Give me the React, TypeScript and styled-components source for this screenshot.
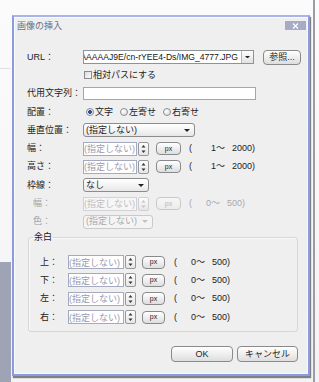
import React from "react";
import styled, { createGlobalStyle } from "styled-components";

const Global = createGlobalStyle`
  html, body { margin: 0; padding: 0; }
  body {
    width: 319px;
    height: 382px;
    overflow: hidden;
    background: #f7f7f8;
    font-family: "Liberation Sans", "Noto Sans CJK JP", sans-serif;
  }
`;

const ROW = "18.3px";

const Screen = styled.div`
  box-sizing: border-box;
  width: 319px;
  height: 382px;
  padding: 15px 0 0 12px;
  background:
    linear-gradient(#9ea3b6, #9ea3b6) 0 262px / 11px 120px no-repeat,
    linear-gradient(#e0e0e4, #e0e0e4) 0 68px / 11px 1px no-repeat,
    linear-gradient(#9c9ca2, #9c9ca2) 313px 0 / 2px 100% no-repeat,
    linear-gradient(#fbfbfb, #f3f3f5);
`;

const Dialog = styled.div`
  box-sizing: border-box;
  width: 298px;
  height: 361px;
  display: flex;
  flex-direction: column;
  background: #efefef;
  border: 2px solid #8b9be2;
  border-top-color: #a9b4ea;
  box-shadow: inset 1px 1px 0 #fcfcfc, inset -1px -1px 0 #f8f8f8,
    1px 2px 1px rgba(50, 50, 60, 0.6);
`;

const TitleBar = styled.div`
  height: 19px;
  display: flex;
  align-items: center;
  justify-content: space-between;
  padding: 0 2px 0 3px;
`;

const Title = styled.span`
  font-size: 9px;
  line-height: 11px;
  color: #6b6f88;
`;

const CloseButton = styled.div`
  align-self: flex-start;
  margin-top: 4px;
  width: 21px;
  height: 9px;
  background: #a8abc5;
  display: flex;
  align-items: center;
  justify-content: center;
`;

const Body = styled.div`
  flex: 1;
  display: flex;
  flex-direction: column;
  padding: 12px 10px 0 13px;
`;

const Row = styled.div<{ $pad?: number }>`
  display: flex;
  align-items: center;
  height: ${ROW};
  padding-left: ${(p) => p.$pad ?? 0}px;
`;

const Label = styled.span<{ $w?: number; $indent?: boolean; $disabled?: boolean }>`
  flex-shrink: 0;
  box-sizing: border-box;
  width: ${(p) => p.$w ?? 56}px;
  padding-left: ${(p) => (p.$indent ? 6 : 0)}px;
  font-size: 9px;
  line-height: 11px;
  color: ${(p) => (p.$disabled ? "#a2a2a6" : "#1c1c1c")};
  white-space: nowrap;
`;

const Text = styled.span<{ $disabled?: boolean }>`
  font-size: 9px;
  line-height: 11px;
  color: ${(p) => (p.$disabled ? "#a8a8ac" : "#1c1c1c")};
  white-space: nowrap;
`;

/* URL combo box */
const Combo = styled.div`
  box-sizing: border-box;
  display: flex;
  width: 171px;
  height: 14px;
  border: 1px solid #8e9398;
  background: #fff;
`;

const ComboText = styled.div`
  flex: 1;
  min-width: 0;
  overflow: hidden;
  display: flex;
  justify-content: flex-end;
  align-items: center;
  white-space: nowrap;
  font-size: 8.6px;
  color: #151515;
  padding-right: 3px;
`;

const ComboArrow = styled.div`
  width: 11px;
  border-left: 1px solid #b3b7bc;
  background: linear-gradient(#fdfdfd, #e2e2e2);
  display: flex;
  align-items: center;
  justify-content: center;
`;

const PushButton = styled.button<{ $w: number; $h?: number; $disabled?: boolean; $small?: boolean }>`
  box-sizing: border-box;
  flex-shrink: 0;
  width: ${(p) => p.$w}px;
  height: ${(p) => p.$h ?? 15}px;
  padding: 0;
  border: 1px solid ${(p) => (p.$disabled ? "#c9c9cb" : "#8a8a8c")};
  border-radius: 4px;
  background: ${(p) =>
    p.$disabled
      ? "linear-gradient(#f6f6f6, #ececec)"
      : "linear-gradient(#ffffff, #f0f0f0 45%, #dedede)"};
  font-family: inherit;
  font-size: ${(p) => (p.$small ? 7 : 9)}px;
  line-height: 10px;
  color: ${(p) => (p.$disabled ? "#b8b8bc" : "#1e1e1e")};
  display: flex;
  align-items: center;
  justify-content: center;
`;

const CheckBox = styled.span`
  box-sizing: border-box;
  width: 8px;
  height: 8px;
  margin: 0 1px 0 1px;
  border: 1px solid #8a8a8c;
  background: linear-gradient(135deg, #dcdcdc, #fbfbfb);
`;

const TextField = styled.div<{ $w: number }>`
  box-sizing: border-box;
  width: ${(p) => p.$w}px;
  height: 13px;
  border: 1px solid #a2a7ad;
  background: #fff;
`;

const RadioGroup = styled.div`
  display: flex;
  align-items: center;
  gap: 7px;
  padding-left: 3px;
`;

const RadioItem = styled.label`
  display: flex;
  align-items: center;
  gap: 1px;
`;

const RadioDot = styled.span<{ $checked?: boolean }>`
  box-sizing: border-box;
  width: 8px;
  height: 8px;
  border-radius: 50%;
  border: 1px solid #8c8e94;
  background: ${(p) =>
    p.$checked
      ? "radial-gradient(circle, #2f4f9a 0 1.6px, #e9e9ee 2.2px)"
      : "radial-gradient(circle at 35% 35%, #ffffff, #d4d4d8)"};
`;

const Select = styled.div<{ $w: number; $disabled?: boolean }>`
  box-sizing: border-box;
  width: ${(p) => p.$w}px;
  height: 14px;
  display: flex;
  align-items: center;
  justify-content: space-between;
  padding: 0 4px 0 2px;
  border: 1px solid ${(p) => (p.$disabled ? "#cacacc" : "#8c8c8e")};
  border-radius: 3px;
  background: ${(p) =>
    p.$disabled ? "#f4f4f4" : "linear-gradient(#ffffff, #f2f2f2 60%, #e6e6e6)"};
`;

const SpinGroup = styled.div`
  display: flex;
  align-items: center;
  gap: 1px;
`;

const SpinField = styled.div<{ $w: number; $disabled?: boolean }>`
  box-sizing: border-box;
  width: ${(p) => p.$w}px;
  height: 14px;
  display: flex;
  align-items: center;
  overflow: hidden;
  border: 1px solid ${(p) => (p.$disabled ? "#d2d2d6" : "#a6aac0")};
  background: ${(p) => (p.$disabled ? "#f6f6f6" : "#fff")};
  font-size: 9px;
  color: ${(p) => (p.$disabled ? "#bdbdc4" : "#9a98ac")};
  white-space: nowrap;
`;

const SpinArrows = styled.div<{ $disabled?: boolean }>`
  box-sizing: border-box;
  width: 11px;
  height: 14px;
  border: 1px solid ${(p) => (p.$disabled ? "#d0d0d2" : "#98989c")};
  border-radius: 2px;
  background: linear-gradient(#fdfdfd, #e6e6e6);
  display: flex;
  align-items: center;
  justify-content: center;
`;

const Range = styled.div<{ $gap: number; $disabled?: boolean }>`
  display: flex;
  align-items: center;
  margin-left: ${(p) => p.$gap}px;
  font-size: 9px;
  line-height: 11px;
  color: ${(p) => (p.$disabled ? "#a8a8ac" : "#1c1c1c")};
  white-space: nowrap;
`;

const RangeNum = styled.span<{ $w: number }>`
  width: ${(p) => p.$w}px;
  text-align: right;
`;

const Group = styled.fieldset`
  box-sizing: border-box;
  width: 270px;
  margin: 1px 0 0 1px;
  padding: 10px 0 5px 0;
  border: 1px solid #d6d6d8;
  border-radius: 3px;
  box-shadow: inset 1px 1px 0 #fafafa;
`;

const Legend = styled.legend`
  margin-left: 4px;
  padding: 0 1px;
  font-size: 9px;
  line-height: 11px;
  color: #1c1c1c;
`;

const Footer = styled.div`
  display: flex;
  justify-content: flex-end;
  gap: 4px;
  margin-top: 14px;
`;

const DownArrow = ({ color = "#222", w = 6 }: { color?: string; w?: number }) => (
  <svg width={w} height={w / 2} viewBox="0 0 6 3">
    <path d="M0 0 H6 L3 3 Z" fill={color} />
  </svg>
);

const SpinGlyph = ({ color }: { color: string }) => (
  <svg width="5" height="10" viewBox="0 0 5 10">
    <path d="M2.5 1 L4.5 3.5 H0.5 Z" fill={color} />
    <path d="M2.5 9 L4.5 6.5 H0.5 Z" fill={color} />
  </svg>
);

type SpinProps = {
  field: number;
  disabled?: boolean;
};

const Spin = ({ field, disabled }: SpinProps) => (
  <SpinGroup>
    <SpinField $w={field} $disabled={disabled}>
      (指定しない)
    </SpinField>
    <SpinArrows $disabled={disabled}>
      <SpinGlyph color={disabled ? "#c4c4c8" : "#333"} />
    </SpinArrows>
  </SpinGroup>
);

type SizeRowProps = {
  label: string;
  indent?: boolean;
  disabled?: boolean;
  min: string;
  max: string;
  minW: number;
  maxW: number;
};

const SizeRow = ({ label, indent, disabled, min, max, minW, maxW }: SizeRowProps) => (
  <Row>
    <Label $indent={indent} $disabled={disabled}>
      {label}
    </Label>
    <Spin field={54} disabled={disabled} />
    <PushButton $w={25} $h={13} $small $disabled={disabled} style={{ marginLeft: 7 }}>
      px
    </PushButton>
    <Range $gap={8} $disabled={disabled}>
      <span>(</span>
      <RangeNum $w={minW}>{min}</RangeNum>
      <RangeNum $w={maxW}>{max}</RangeNum>
    </Range>
  </Row>
);

const MarginRow = ({ label }: { label: string }) => (
  <Row $pad={11}>
    <Label $w={28}>{label}</Label>
    <Spin field={56} />
    <PushButton $w={23} $h={13} $small style={{ marginLeft: 6 }}>
      px
    </PushButton>
    <Range $gap={9}>
      <span>(</span>
      <RangeNum $w={28}>0～</RangeNum>
      <RangeNum $w={25}>500)</RangeNum>
    </Range>
  </Row>
);

export default function App() {
  return (
    <>
      <Global />
      <Screen>
        <Dialog>
          <TitleBar>
            <Title>画像の挿入</Title>
            <CloseButton>
              <svg width="7" height="6" viewBox="0 0 7 6">
                <path d="M1 0.5 L6 5.5 M6 0.5 L1 5.5" stroke="#fff" strokeWidth="1.2" />
              </svg>
            </CloseButton>
          </TitleBar>
          <Body>
            <Row>
              <Label>URL：</Label>
              <Combo>
                <ComboText>
                  <span>\AAAAAJ9E/cn-rYEE4-Ds/IMG_4777.JPG</span>
                </ComboText>
                <ComboArrow>
                  <DownArrow w={5} />
                </ComboArrow>
              </Combo>
              <PushButton $w={38} style={{ marginLeft: 9 }}>
                参照...
              </PushButton>
            </Row>
            <Row $pad={56}>
              <CheckBox />
              <Text>相対パスにする</Text>
            </Row>
            <Row>
              <Label>代用文字列：</Label>
              <TextField $w={173} />
            </Row>
            <Row>
              <Label>配置：</Label>
              <RadioGroup>
                <RadioItem>
                  <RadioDot $checked />
                  <Text>文字</Text>
                </RadioItem>
                <RadioItem>
                  <RadioDot />
                  <Text>左寄せ</Text>
                </RadioItem>
                <RadioItem>
                  <RadioDot />
                  <Text>右寄せ</Text>
                </RadioItem>
              </RadioGroup>
            </Row>
            <Row>
              <Label>垂直位置：</Label>
              <Select $w={112}>
                <Text>(指定しない)</Text>
                <DownArrow />
              </Select>
            </Row>
            <SizeRow label="幅：" min="1～" max="2000)" minW={33} maxW={30} />
            <SizeRow label="高さ：" min="1～" max="2000)" minW={33} maxW={30} />
            <Row>
              <Label>枠線：</Label>
              <Select $w={66}>
                <Text>なし</Text>
                <DownArrow />
              </Select>
            </Row>
            <SizeRow label="幅：" indent disabled min="0～" max="500)" minW={28} maxW={25} />
            <Row>
              <Label $indent $disabled>
                色：
              </Label>
              <Select $w={70} $disabled>
                <Text $disabled>(指定しない)</Text>
                <DownArrow color="#c2c2c6" />
              </Select>
            </Row>
            <Group>
              <Legend>余白</Legend>
              <MarginRow label="上：" />
              <MarginRow label="下：" />
              <MarginRow label="左：" />
              <MarginRow label="右：" />
            </Group>
            <Footer>
              <PushButton $w={62} $h={16}>
                OK
              </PushButton>
              <PushButton $w={61} $h={16}>
                キャンセル
              </PushButton>
            </Footer>
          </Body>
        </Dialog>
      </Screen>
    </>
  );
}
